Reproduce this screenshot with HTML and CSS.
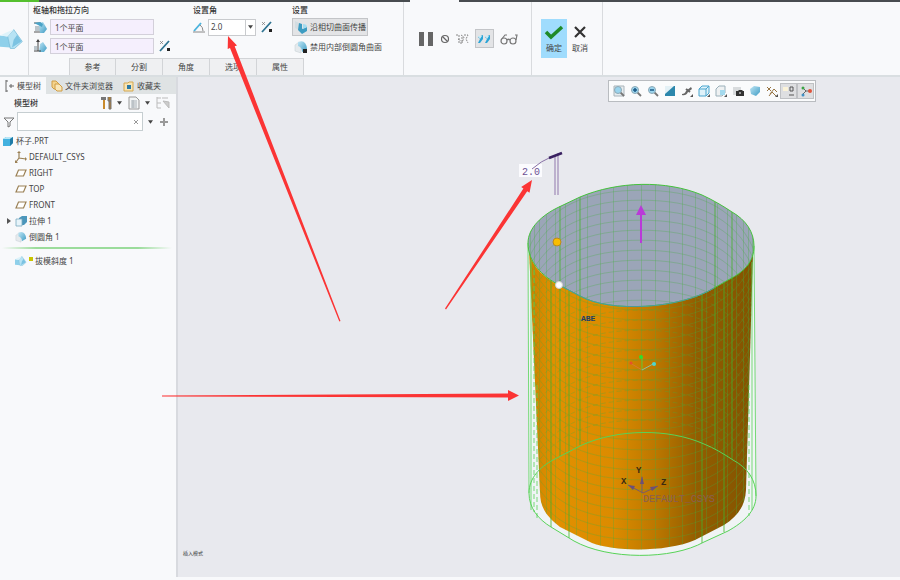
FILE: index.html
```html
<!DOCTYPE html>
<html lang="zh-CN">
<head>
    <meta charset="UTF-8">
    <meta name="viewport" content="width=device-width, initial-scale=1.0">
    <title>杯子.PRT</title>
    <link rel="stylesheet" href="styles.css">
</head>
<body>
    <!-- Shared icons -->
    <svg class="defs" aria-hidden="true">
        <defs>
            <linearGradient id="blue" x1="0" y1="0" x2="1" y2="1">
                <stop offset="0" stop-color="#bfe6f5"/>
                <stop offset="1" stop-color="#3f9cc4"/>
            </linearGradient>
            <symbol id="i-draft" viewBox="0 0 28 24">
                <path d="M0 8l9 1 3 13-12-1z" fill="#8fd0ea"/>
                <path d="M9 9l7-8 10 14-9 8H12z" fill="#b7e3f4" stroke="#6bb5d4" stroke-width=".8"/>
                <path d="M14 22l2-9 4-6 5 8z" fill="#7cc3e2"/>
                <path d="M0 8l9 1 7-8-8 3z" fill="#def3fa"/>
            </symbol>
            <symbol id="i-hinge" viewBox="0 0 14 14">
                <path d="M1 3h7M1 12h6" stroke="#555" stroke-width="1.2"/>
                <path d="M2 6h5v5H2z" fill="#b9c4ca"/>
                <path d="M6 3l4-1 4 7-3 4H7z" fill="url(#blue)"/>
                <path d="M1 3l6-1 3 2-1 3z" fill="#4aa3c7"/>
            </symbol>
            <symbol id="i-pull" viewBox="0 0 14 14">
                <path d="M1 7h3v4H1z" fill="#b9c4ca"/>
                <path d="M7 5l3-2 4 6-3 4H6z" fill="url(#blue)"/>
                <path d="M5 1v11M1 12h7" stroke="#444" fill="none"/>
                <path d="M3 3l2-3 2 3z" fill="#444"/>
            </symbol>
            <symbol id="i-flip" viewBox="0 0 12 12">
                <path d="M1 11L10 1" stroke="#2f7391" stroke-width="1.8"/>
                <path d="M1 1l3 3M1 4l3-3" stroke="#777" stroke-width=".7"/>
                <path d="M8 8h3v3H8z" fill="#222"/>
            </symbol>
            <symbol id="i-angle" viewBox="0 0 12 12">
                <path d="M1 10L8 2" stroke="#49b3dd" stroke-width="1.8"/>
                <path d="M0 11h12M7 4q3 2 3 6" stroke="#888" fill="none"/>
            </symbol>
            <symbol id="i-tangent" viewBox="0 0 14 14">
                <path d="M1 1l4 2v7L1 8z" fill="#d3dde2"/>
                <path d="M5 3l3 1v5l5-2v4l-5 3-4-4z" fill="#3d9cc2"/>
                <path d="M9 4q4 0 4 3l-4 2z" fill="#a5dcf0"/>
            </symbol>
            <symbol id="i-round" viewBox="0 0 14 14">
                <path d="M1 5l4-3 2 5v6l-6-2z" fill="#e5eaed" stroke="#c3ccd1" stroke-width=".5"/>
                <path d="M4 2q8-3 9 7l-5 3q0-5-4-6z" fill="url(#blue)"/>
            </symbol>
            <symbol id="i-caret" viewBox="0 0 6 4">
                <path d="M0 0h6L3 4z" fill="#444"/>
            </symbol>
            <symbol id="i-plane" viewBox="0 0 12 12">
                <path d="M3.500 3H11L8.500 9H1z" fill="#fff" stroke="#9a8055" stroke-width="1.200"/>
            </symbol>
            <symbol id="i-csys" viewBox="0 0 12 12">
                <path d="M4 1v6l7 1M4 7l-3 4" fill="none" stroke="#9a8055" stroke-width="1.2"/>
                <path d="M2 2l2-2 2 2zM10 6l2 2-2 2zM0 9v3h3z" fill="#9a8055"/>
            </symbol>
            <symbol id="i-cube" viewBox="0 0 12 12">
                <path d="M1 4l3-2h7v6l-3 3H1z" fill="#43b1df"/>
                <path d="M1 4l3-2h7L8 4z" fill="#b7e6f6"/>
                <path d="M8 4l3-2v6l-3 3z" fill="#1f7ba7"/>
            </symbol>
            <symbol id="i-extrude" viewBox="0 0 12 12">
                <path d="M4 3l3-2h5v6l-3 3H4z" fill="#4b96bb"/>
                <path d="M1 4h6v7H1z" fill="#e7f4fa" stroke="#7aa9bf" stroke-width=".8"/>
            </symbol>
            <symbol id="i-lens" viewBox="0 0 12 12">
                <path d="M7 7l4 4" stroke="#777" stroke-width="1.800"/>
                <circle cx="5" cy="5" r="3.500" fill="#9bd5ee" stroke="#8ea9b6"/>
            </symbol>
        </defs>
    </svg>

    <div class="window-strip">
        <span class="strip-green"></span>
        <span class="strip-dark strip-left"></span>
        <span class="strip-gap"></span>
        <span class="strip-dark strip-right"></span>
    </div>

    <header class="ribbon">
        <div class="feature-icon"><svg width="24" height="22"><use href="#i-draft"/></svg></div>

        <div class="dashboard">
            <div class="groups">
                <section class="group">
                    <h2>枢轴和拖拉方向</h2>
                    <div class="field-row">
                        <label for="hinge"><svg class="icon-l"><use href="#i-hinge"/></svg></label>
                        <input type="text" id="hinge" class="collector" value="1个平面">
                    </div>
                    <div class="field-row">
                        <label for="pull"><svg class="icon-l"><use href="#i-pull"/></svg></label>
                        <input type="text" id="pull" class="collector" value="1个平面">
                        <button type="button" class="flip-btn" aria-label="反向"><svg class="icon-m"><use href="#i-flip"/></svg></button>
                    </div>
                </section>
                <section class="group">
                    <h2>设置角</h2>
                    <div class="field-row">
                        <label for="angle"><svg class="icon-m"><use href="#i-angle"/></svg></label>
                        <div class="combo">
                            <select id="angle">
                                <option>2.0</option>
                            </select>
                            <span class="combo-arrow"><svg class="caret"><use href="#i-caret"/></svg></span>
                        </div>
                        <button type="button" class="flip-btn" aria-label="反向角度"><svg class="icon-m"><use href="#i-flip"/></svg></button>
                    </div>
                </section>
                <section class="group options">
                    <h2>设置</h2>
                    <button type="button" class="option-btn active"><svg class="icon-l"><use href="#i-tangent"/></svg>沿相切曲面传播</button>
                    <button type="button" class="option-btn"><svg class="icon-l"><use href="#i-round"/><path d="M9 9h4v4H9z" fill="#222"/></svg>禁用内部倒圆角曲面</button>
                </section>
            </div>
            <nav class="panel-tabs">
                <button type="button">参考</button>
                <button type="button">分割</button>
                <button type="button">角度</button>
                <button type="button">选项</button>
                <button type="button">属性</button>
            </nav>
        </div>

        <div class="preview-tools">
            <button type="button" aria-label="暂停"><svg width="16" height="16"><path d="M1 1h5v14H1zM10 1h5v14h-5z" fill="#666"/></svg></button>
            <button type="button" aria-label="无预览"><svg width="10" height="10"><circle cx="5" cy="5" r="3.500" fill="none" stroke="#666" stroke-width="1.200"/><path d="M2.500 2.500l5 5" stroke="#666" stroke-width="1.200"/></svg></button>
            <button type="button" aria-label="分离"><svg width="14" height="12" fill="none" stroke="#888" stroke-dasharray="2 1"><path d="M1 2h3v8h3V4M6 2l3 2-2 6M9 2h4l-2 4 2 4M3 6l3 2"/></svg></button>
            <button type="button" class="active" aria-label="连接"><svg width="14" height="12"><path d="M1 4l5-2v4L3 10H1l2-4zM8 4l5-2v4l-3 4H8l2-4z" fill="#2ba4d6"/><path d="M1 3h4L3 6zM8 3h4l-2 3z" fill="#c6eaf7"/></svg></button>
            <button type="button" aria-label="校验"><svg width="20" height="12" fill="none" stroke="#777" stroke-width="1.200"><circle cx="5" cy="8" r="3"/><circle cx="14" cy="8" r="3"/><path d="M8 7q1.500-1.500 3 0M2 7l4-5h2M17 7l1-5h-2"/></svg></button>
        </div>

        <div class="confirm">
            <button type="button" class="ok"><svg width="20" height="16"><path d="M2 8l5 5L18 3" fill="none" stroke="#1f8a28" stroke-width="3.500"/></svg>确定</button>
            <button type="button" class="cancel"><svg width="14" height="16"><path d="M2 3l10 10M12 3L2 13" stroke="#333" stroke-width="2.200"/></svg>取消</button>
        </div>
    </header>

    <div class="workspace">
        <aside class="navigator">
            <nav class="nav-tabs">
                <button type="button" class="active"><svg width="10" height="12" fill="none" stroke="#666"><path d="M1 0v12M1 1h2M1 11h2M4 6h5M6 4v4"/></svg>模型树</button>
                <button type="button"><svg width="12" height="12"><path d="M1 1h4l3 3v5H3L1 7z" fill="#f4d38c" stroke="#cf9c44"/><path d="M4 4h4l3 3v4H6L4 9z" fill="#fae7b8" stroke="#cf9c44"/></svg>文件夹浏览器</button>
                <button type="button"><svg width="12" height="12"><path d="M1 3h4l1-1h4v9H1z" fill="#f8e5b5" stroke="#d5a850"/><path d="M4 5h4v4H4z" fill="#2a79a5"/></svg>收藏夹</button>
            </nav>
            <div class="tree-header">
                <h2>模型树</h2>
                <button type="button" aria-label="设置"><svg width="12" height="14"><path d="M1 1h5v3H1z" fill="#777"/><path d="M3 4h2v9H3z" fill="#c98b2d"/><path d="M8 1v4h3V1M9 5h2v8H9z" fill="#ad7c34" stroke="#777"/></svg><svg class="caret"><use href="#i-caret"/></svg></button>
                <button type="button" aria-label="显示"><svg width="12" height="14"><path d="M1 1h7l3 3v9H1z" fill="#f2f4f5" stroke="#999"/><path d="M3 5h6M3 7h6M3 9h6M3 11h6M5 4v8" stroke="#aab2b8"/></svg><svg class="caret"><use href="#i-caret"/></svg></button>
                <button type="button" aria-label="选择"><svg width="14" height="14" fill="none" stroke="#bbb"><path d="M1 1v11M1 2h4M1 7h4M1 12h4M6 2h6"/><path d="M7 5l6 7V6z" fill="#ccc"/></svg></button>
            </div>
            <div class="search-row">
                <label for="search" aria-label="过滤"><svg width="12" height="12"><path d="M1 2h10L7 6v4l-2 1V6z" fill="none" stroke="#777"/></svg></label>
                <div class="search-box">
                    <input type="text" id="search">
                    <button type="button" aria-label="清除"><svg width="6" height="6"><path d="M1 1l4 4M5 1L1 5" stroke="#999"/></svg></button>
                </div>
                <svg class="caret"><use href="#i-caret"/></svg>
                <button type="button" aria-label="添加"><svg width="8" height="8"><path d="M4 0v8M0 4h8" stroke="#999" stroke-width="2"/></svg></button>
            </div>
            <ul class="tree">
                <li class="root"><svg class="icon-m"><use href="#i-cube"/></svg>杯子.PRT</li>
                <li><svg class="icon-m"><use href="#i-csys"/></svg>DEFAULT_CSYS</li>
                <li><svg class="icon-m"><use href="#i-plane"/></svg>RIGHT</li>
                <li><svg class="icon-m"><use href="#i-plane"/></svg>TOP</li>
                <li><svg class="icon-m"><use href="#i-plane"/></svg>FRONT</li>
                <li class="expandable"><svg class="expander" viewBox="0 0 4 6"><path d="M0 0l4 3-4 3z" fill="#555"/></svg><svg class="icon-m"><use href="#i-extrude"/></svg>拉伸 1</li>
                <li><svg class="icon-m" viewBox="0 0 14 14"><use href="#i-round"/></svg>倒圆角 1</li>
            </ul>
            <div class="insert-line"></div>
            <ul class="tree">
                <li><svg class="icon-m" viewBox="0 0 28 24"><use href="#i-draft"/></svg><span class="new-mark"></span>拔模斜度 1</li>
            </ul>
        </aside>

        <main class="viewport">
            <svg class="scene" viewBox="178 77 722 500" width="722" height="500">
                <defs>
                    <linearGradient id="body" x1="528" x2="754" y1="0" y2="0" gradientUnits="userSpaceOnUse">
                        <stop offset="0" stop-color="#cc8200"/>
                        <stop offset=".12" stop-color="#e29000"/>
                        <stop offset=".38" stop-color="#db8b00"/>
                        <stop offset=".56" stop-color="#bd7800"/>
                        <stop offset=".75" stop-color="#925d00"/>
                        <stop offset="1" stop-color="#845300"/>
                    </linearGradient>
                    <path id="rim" d="M528 243C528 228 542 215 559 207L580 197C618 181 666 180 702 195C713 200 723 206 732 212C746 220 754 232 754 246C754 262 744 272 728 280L714 288C680 309 610 313 580 296L559 285C542 276 528 262 528 243Z"/>
                    <path id="base" d="M529 493C529 478 540 467 553 460L582 445C618 429 668 428 704 444C714 448 724 454 733 460C748 468 756 480 756 496C756 511 744 522 728 531L704 542C672 560 608 560 574 541L551 527C538 519 529 508 529 493Z"/>
                    <path id="solid" d="M529 250C532 267 543 277 559 285L580 296C610 313 680 309 714 288L728 280C741 273 750 266 753 254L746 490C745 506 738 516 724 525L695 540C668 552 616 552 592 543L560 527C546 516 540 507 540 492Z"/>
                    <clipPath id="rimClip"><use href="#rim"/></clipPath>
                    <clipPath id="solidClip"><use href="#solid"/></clipPath>
                </defs>

                <path d="M528 243L529 493C529 508 538 519 551 527L574 541C608 560 672 560 704 542L728 531C744 522 756 511 756 496L754 246Z" fill="#f0f4f5"/>
                <use href="#solid" fill="url(#body)"/>
                <use href="#rim" fill="#9ba5b8"/>
                <path id="rimMesh" clip-path="url(#rimClip)" class="mesh"/>
                <path id="bodyMesh" clip-path="url(#solidClip)" class="mesh"/>
                <path id="bodyMeshBack" clip-path="url(#solidClip)" class="mesh dashed"/>
                <path class="edge" d="M551 280V527M560 206V456M569 291V538M580 197V445M702 294V543M715 202V449M724 283V532M732 212V459"/>
                <path class="edge thin" d="M528 243L529 493M531 260V510M754 246L756 496M752 262V510"/>
                <path class="edge thin dashed" d="M534 270V512M537 385V518M749 385V516"/>
                <use href="#rim" class="outline"/>
                <use href="#base" class="outline thin"/>
                <path d="M559 285L580 296C610 313 680 309 714 288" fill="none" stroke="#4d9a9c"/>

                <!-- Draft angle dimension -->
                <path d="M519 164h23v13h-23z" fill="#fbfbfe"/>
                <text x="522" y="175" class="dim">2.0</text>
                <path d="M555 155v40M558 153v42" stroke="#a08bb8" stroke-width="1.200"/>
                <path d="M532 169Q541 161 551 157" fill="none" stroke="#8870a5"/>
                <path d="M549 158l13-5" stroke="#392060" stroke-width="2.500"/>

                <path d="M641 243v-30" stroke="#b93ad8" stroke-width="2"/>
                <path d="M641 205l5 10h-10z" fill="#b93ad8"/>
                <circle cx="557" cy="242" r="4" fill="#f8bd00" stroke="#b88a20"/>
                <circle cx="559" cy="285" r="3.500" fill="#fff" stroke="#d0d0d0"/>
                <text x="581" y="321" class="tag">ABE</text>

                <path d="M642 370l-12-7" stroke="#d77a30"/>
                <path d="M642 370v-13" stroke="#74c32a"/>
                <path d="M642 370l11-6" stroke="#8cc2a0"/>
                <circle cx="631" cy="363" r="1.500" fill="#e8502b"/>
                <circle cx="641" cy="357" r="2" fill="#2de02d"/>
                <circle cx="654" cy="364" r="2" fill="#4ed5cf"/>

                <path d="M628 485l15 8 15-7M642 493v-16" fill="none" stroke="#7c5a6a"/>
                <path d="M628 485l7 1-2 4zM642 476l2 8h-4zM658 486l-6 5-2-4z" fill="#6b5078"/>
                <text x="621" y="484" class="axis">X</text>
                <text x="636" y="473" class="axis">Y</text>
                <text x="661" y="485" class="axis">Z</text>
                <text x="643" y="502" class="csys-name">DEFAULT_CSYS</text>
            </svg>

            <div class="view-toolbar">
                <button type="button" aria-label="重新调整"><svg class="icon-m"><path d="M1 1h10v10H1z" fill="#e8edef" stroke="#a9b4ba"/><use href="#i-lens"/></svg></button>
                <button type="button" aria-label="放大"><svg class="icon-m"><use href="#i-lens"/><path d="M3 5h4M5 3v4" stroke="#1c5a86" stroke-width="1.500"/></svg></button>
                <button type="button" aria-label="缩小"><svg class="icon-m"><use href="#i-lens"/><path d="M3 5h4" stroke="#1c5a86" stroke-width="1.500"/></svg></button>
                <button type="button" aria-label="重画"><svg class="icon-m"><path d="M1 1h10v10H1z" fill="#2c87ac"/><path d="M1 1h9L1 9z" fill="#e4f1f6"/></svg></button>
                <button type="button" aria-label="渲染"><svg class="icon-m"><path d="M1 9q3 0 4-3l5-4 1 2-4 3q-2 4-6 3z" fill="#666"/><path d="M5 4l4 3" stroke="#666" stroke-width="2"/><path d="M12 9v3H9z" fill="#555"/></svg></button>
                <button type="button" aria-label="显示样式"><svg class="icon-m"><path d="M1 4l3-3h7v7l-3 3H1zM1 4h7v7M8 4l3-3" fill="#dff2fa" stroke="#4aa5ce"/><path d="M12 9v3H9z" fill="#555"/></svg></button>
                <button type="button" aria-label="已保存方向"><svg class="icon-m"><path d="M1 4l3-3h6v7l-3 3H1z" fill="#eef1f2" stroke="#9bb0ba"/><path d="M5 5h5v5H5z" fill="#a4daee"/><path d="M12 9v3H9z" fill="#555"/></svg></button>
                <button type="button" aria-label="视图管理器"><svg class="icon-m"><path d="M1 2h8v8H1z" fill="#d9dcde"/><path d="M4 6h2l1-1h3l1 1h1v5H4z" fill="#333"/><circle cx="8" cy="8" r="1" fill="#bbb"/></svg></button>
                <button type="button" aria-label="外观"><svg class="icon-m"><path d="M1 4l4-3 6 1v5l-4 4-5-2z" fill="url(#blue)"/></svg></button>
                <button type="button" aria-label="基准显示"><svg class="icon-m"><path d="M1 2l4 4M5 2L1 6M4 9l4-5 3 3M3 11l3-4 4 4" fill="none" stroke="#987543"/><path d="M12 9v3H9z" fill="#555"/></svg></button>
                <button type="button" class="active" aria-label="注释显示"><svg class="icon-m"><path d="M0 2h5v4H0z" fill="#fbf3d9"/><path d="M7 2h3v4H7zM6 10h5" fill="none" stroke="#555"/></svg></button>
                <button type="button" class="active" aria-label="旋转中心"><svg class="icon-m"><path d="M2 2l4 4-4 4M6 6h4" fill="none" stroke="#666"/><circle cx="3" cy="3" r="1.500" fill="#3aa344"/><circle cx="10" cy="6" r="2" fill="#e0533b"/><circle cx="3" cy="10" r="1.500" fill="#3f8fc4"/></svg></button>
            </div>

            <span class="mode-label">插入模式</span>
        </main>
    </div>
    <footer class="status-bar"></footer>

    <!-- Callout arrows -->
    <svg class="callouts" viewBox="0 0 900 580" width="900" height="580" fill="#fb3434">
        <path d="M228 36L237 45.400L234.700 46.300L340.500 321L339.300 321.500L230 48.100L227.700 49Z"/>
        <path d="M532 180L529.500 192.700L527.200 191.200L446 309.500L445 308.500L523.400 188.600L521.200 187.100Z"/>
        <path d="M519 395.500L508 401V397.500L162 396.500V395.500L508 393.500V390Z"/>
    </svg>

    <script>
        // Vertical mesh lines get closer together towards the silhouette
        function verticals(top, bottom) {
            let d = '';
            for (let a = -77; a <= 77; a += 7) {
                const x = Math.round(641 + 114 * Math.sin(a * Math.PI / 180));
                d += `M${x + 0.5} ${top}V${bottom}`;
            }
            return d;
        }

        // Horizontal mesh lines, bend > 0 dips towards the viewer
        function rings(from, to, step, bend) {
            let d = '';
            for (let y = from; y <= to; y += step) {
                d += `M528 ${y}C548 ${y + bend} 590 ${y + bend * 1.3} 641 ${y + bend * 1.3}S734 ${y + bend} 754 ${y}`;
            }
            return d;
        }

        document.getElementById('rimMesh').setAttribute('d', verticals(184, 308) + rings(250, 370, 10, -46));
        document.getElementById('bodyMesh').setAttribute('d', verticals(245, 552) + rings(250, 510, 10, 46));
        document.getElementById('bodyMeshBack').setAttribute('d', rings(300, 480, 10, -46));
    </script>
</body>
</html>
```
FILE: styles.css
```css
* {
    box-sizing: border-box;
}

body {
    font-family: "Noto Sans", "Noto Sans CJK SC", sans-serif;
    font-size: 8px;
    line-height: 12px;
    color: #444;
    background-color: #f8f9fb;
    margin: 0;
    min-height: 100vh;
    display: flex;
    flex-direction: column;
    position: relative;
    overflow-x: hidden;
}

h2 {
    font-size: 8px;
    line-height: 12px;
    font-weight: 500;
    color: #333;
    margin: 0;
}

button, input, select {
    font: inherit;
    color: inherit;
    background: none;
    border: none;
    border-radius: 0;
    padding: 0;
    margin: 0;
}

button {
    display: flex;
    align-items: center;
    justify-content: center;
    cursor: pointer;
    white-space: nowrap;
}

label {
    display: flex;
}

svg {
    display: block;
    flex: none;
}

.defs {
    position: absolute;
    width: 0;
    height: 0;
}

.icon-l {
    width: 14px;
    height: 14px;
}

.icon-m {
    width: 12px;
    height: 12px;
}

.caret {
    width: 5px;
    height: 4px;
}

/* Top strip */
.window-strip {
    display: flex;
    height: 2px;
}

.strip-green {
    width: 39px;
    background: #55c02f;
}

.strip-dark {
    background: #484c50;
}

.strip-left {
    width: 371px;
}

.strip-gap {
    width: 49px;
}

.strip-right {
    flex: 1;
}

/* Ribbon */
.ribbon {
    display: flex;
    border-bottom: 2px solid #d9dee1;
}

.feature-icon {
    width: 29px;
    padding-top: 26px;
    border-right: 1px solid #d9dbde;
}

.dashboard {
    width: 375px;
    border-right: 1px solid #d9dbde;
    display: flex;
    flex-direction: column;
    justify-content: space-between;
}

.groups {
    display: grid;
    grid-template-columns: 160px 99px auto;
    padding: 2px 0 0 4px;
}

.group {
    display: flex;
    flex-direction: column;
    gap: 3px;
}

.group.options {
    gap: 2px;
}

.field-row {
    display: flex;
    align-items: center;
    gap: 3px;
    height: 16px;
}

.collector {
    width: 104px;
    height: 16px;
    padding: 0 4px;
    background: #f5effd;
    border: 1px solid #d3d0da;
}

.flip-btn {
    margin-left: 2px;
}

.combo {
    position: relative;
    width: 48px;
    height: 17px;
    background: #fff;
    border: 1px solid #c9cbce;
}

.combo select {
    width: 100%;
    height: 100%;
    padding-left: 2px;
    appearance: none;
}

.combo-arrow {
    position: absolute;
    top: 0;
    right: 0;
    width: 10px;
    height: 100%;
    display: flex;
    align-items: center;
    justify-content: center;
    border-left: 1px solid #c9cbce;
    pointer-events: none;
}

.option-btn {
    align-self: flex-start;
    height: 18px;
    padding: 0 2px;
    gap: 2px;
}

.option-btn.active {
    background: #e3e4e6;
    border: 1px solid #c3c5c8;
    padding: 0 1px;
}

.panel-tabs {
    display: flex;
    padding-left: 40px;
}

.panel-tabs button {
    width: 47px;
    height: 17px;
    background: #eff0f2;
    border: 1px solid #d2d4d7;
    border-left-width: 0;
    border-bottom: none;
}

.panel-tabs button:first-child {
    border-left-width: 1px;
}

.preview-tools {
    width: 128px;
    padding: 0 12px 0 14px;
    display: flex;
    align-items: center;
    justify-content: space-between;
    border-right: 1px solid #d9dbde;
}

.preview-tools .active {
    width: 19px;
    height: 19px;
    background: #e3e4e6;
    border: 1px solid #c3c5c8;
}

.confirm {
    width: 71px;
    padding: 17px 0 17px 9px;
    display: flex;
    border-right: 1px solid #d9dbde;
}

.confirm button {
    width: 26px;
    height: 39px;
    flex-direction: column;
    gap: 2px;
}

.confirm .ok {
    background: #9fdcfd;
}

/* Model tree */
.workspace {
    flex: 1;
    display: flex;
}

.navigator {
    width: 178px;
    border-right: 2px solid #d8dadf;
}

.nav-tabs {
    display: flex;
    height: 17px;
    background: #dfe3e4;
}

.nav-tabs button {
    gap: 2px;
    padding: 0 5px;
}

.nav-tabs .active {
    width: 46px;
    padding: 0 2px;
    background: #f8f9fb;
}

.tree-header {
    display: flex;
    align-items: center;
    gap: 6px;
    height: 18px;
    padding: 0 6px 0 14px;
}

.tree-header h2 {
    flex: 1;
}

.tree-header button {
    gap: 5px;
}

.search-row {
    display: flex;
    align-items: center;
    height: 19px;
    padding: 0 8px 0 3px;
    gap: 2px;
}

.search-box {
    display: flex;
    flex: 1;
    min-width: 0;
    height: 19px;
    margin-right: 3px;
    padding-right: 3px;
    background: #fff;
    border: 1px solid #c6ced1;
}

.search-box input {
    flex: 1;
    min-width: 0;
    padding: 0 4px;
}

.search-row > .caret {
    margin-right: 5px;
}

.tree {
    list-style: none;
    margin: 0;
    padding: 2px 0;
}

.tree li {
    display: flex;
    align-items: center;
    gap: 2px;
    height: 16px;
    padding-left: 15px;
    white-space: nowrap;
}

.tree .root {
    padding-left: 2px;
}

.tree .expandable {
    padding-left: 7px;
}

.expander {
    width: 4px;
    height: 6px;
    margin-right: 2px;
}

.new-mark {
    width: 4px;
    height: 4px;
    margin-bottom: 4px;
    background: #c9c400;
}

.insert-line {
    height: 2px;
    margin: 0 4px 2px 2px;
    background: linear-gradient(to right, transparent, #9bdc9b 20%, #9bdc9b 80%, transparent);
}

/* Graphics area */
.viewport {
    position: relative;
    flex: 1;
    background: #e8e9ee;
}

.scene {
    position: absolute;
    top: 0;
    left: 0;
}

.mesh {
    fill: none;
    stroke: #46b040;
    stroke-opacity: 0.3;
}

.edge {
    fill: none;
    stroke: #43b22c;
    stroke-opacity: 0.8;
}

.outline {
    fill: none;
    stroke: #45c23c;
}

.thin {
    stroke: #58d358;
}

.dashed {
    stroke-dasharray: 5 3;
}

.dim {
    font: 10px "Liberation Mono", monospace;
    fill: #6b5094;
}

.tag {
    font: bold 8px "Liberation Mono", monospace;
    fill: #1d3f66;
}

.axis {
    font: bold 9px "Liberation Mono", monospace;
    fill: #3a2a10;
}

.csys-name {
    font: 10px "Liberation Mono", monospace;
    fill: #8b5d52;
}

.view-toolbar {
    position: absolute;
    top: 3px;
    right: 84px;
    display: flex;
    padding: 2px 1px;
    background: #fafbfc;
    border: 1px solid #b9bcc0;
}

.view-toolbar button {
    width: 17px;
    height: 16px;
}

.view-toolbar .active {
    background: #dedfe1;
    border: 1px solid #bfc1c4;
}

.mode-label {
    position: absolute;
    left: 5px;
    bottom: 18px;
    font-size: 5px;
}

.status-bar {
    height: 3px;
}

.callouts {
    position: absolute;
    top: 0;
    left: 0;
    pointer-events: none;
}
```
